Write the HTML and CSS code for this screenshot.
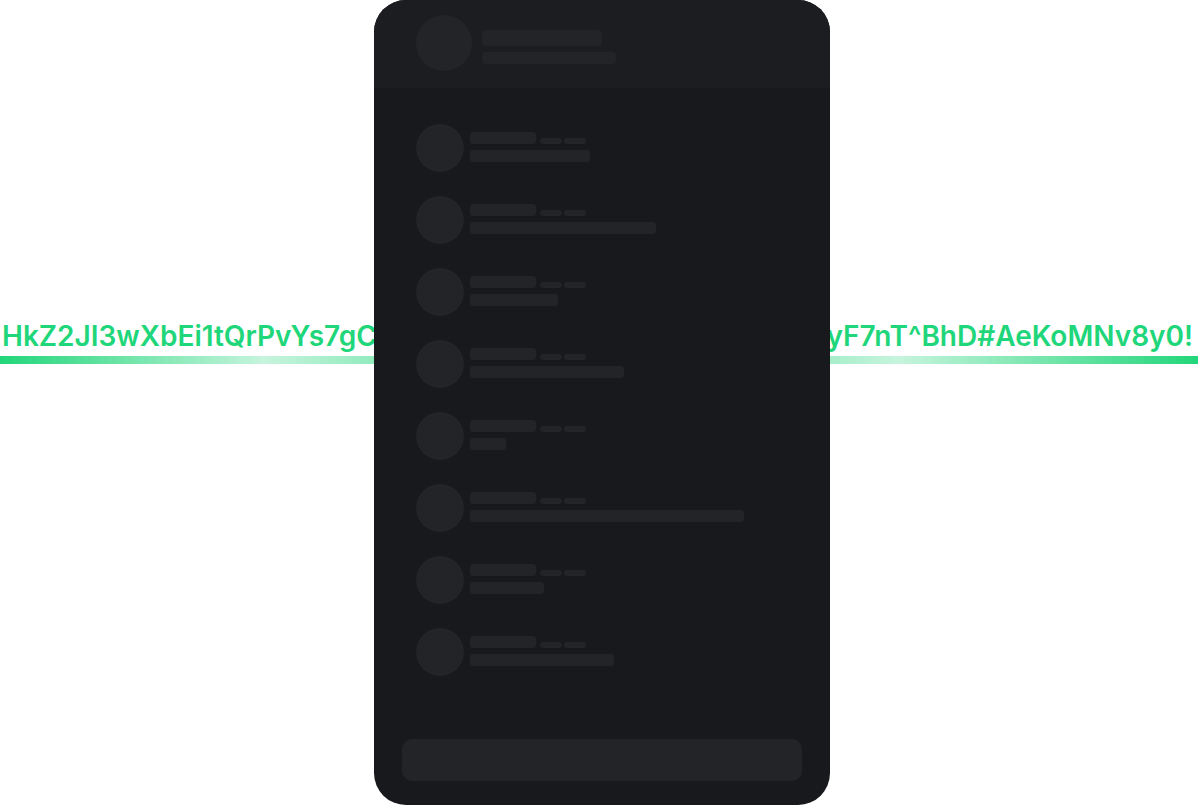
FILE: index.html
```html
<!DOCTYPE html>
<html lang="en">
<head>
<meta charset="utf-8">
<title>Chat skeleton</title>
<link rel="stylesheet" href="styles.css">
</head>
<body>
<div class="stage">
  <div class="strip">
    <div class="strip-text">
      <span class="seg">HkZ2JI3wXbEi1tQrPvYs7gC</span>
      <span class="seg">yF7nT^BhD#AeKoMNv8y0!</span>
    </div>
    <div class="strip-line"></div>
  </div>

  <div class="phone">
    <div class="phone-header">
      <div class="avatar avatar-lg"></div>
      <div class="header-lines">
        <div class="bar bar-title"></div>
        <div class="bar bar-sub"></div>
      </div>
    </div>

    <div class="list">
      <div class="row">
        <div class="avatar"></div>
        <div class="row-text">
          <div class="meta"><div class="bar name"></div><div class="bar tag"></div><div class="bar tag"></div></div>
          <div class="bar msg" style="width:120px"></div>
        </div>
      </div>
      <div class="row">
        <div class="avatar"></div>
        <div class="row-text">
          <div class="meta"><div class="bar name"></div><div class="bar tag"></div><div class="bar tag"></div></div>
          <div class="bar msg" style="width:186px"></div>
        </div>
      </div>
      <div class="row">
        <div class="avatar"></div>
        <div class="row-text">
          <div class="meta"><div class="bar name"></div><div class="bar tag"></div><div class="bar tag"></div></div>
          <div class="bar msg" style="width:88px"></div>
        </div>
      </div>
      <div class="row">
        <div class="avatar"></div>
        <div class="row-text">
          <div class="meta"><div class="bar name"></div><div class="bar tag"></div><div class="bar tag"></div></div>
          <div class="bar msg" style="width:154px"></div>
        </div>
      </div>
      <div class="row">
        <div class="avatar"></div>
        <div class="row-text">
          <div class="meta"><div class="bar name"></div><div class="bar tag"></div><div class="bar tag"></div></div>
          <div class="bar msg" style="width:36px"></div>
        </div>
      </div>
      <div class="row">
        <div class="avatar"></div>
        <div class="row-text">
          <div class="meta"><div class="bar name"></div><div class="bar tag"></div><div class="bar tag"></div></div>
          <div class="bar msg" style="width:274px"></div>
        </div>
      </div>
      <div class="row">
        <div class="avatar"></div>
        <div class="row-text">
          <div class="meta"><div class="bar name"></div><div class="bar tag"></div><div class="bar tag"></div></div>
          <div class="bar msg" style="width:74px"></div>
        </div>
      </div>
      <div class="row">
        <div class="avatar"></div>
        <div class="row-text">
          <div class="meta"><div class="bar name"></div><div class="bar tag"></div><div class="bar tag"></div></div>
          <div class="bar msg" style="width:144px"></div>
        </div>
      </div>
    </div>

    <div class="phone-footer">
      <div class="composer"></div>
    </div>
  </div>
</div>
</body>
</html>
```

FILE: styles.css
```css
* { box-sizing: border-box; }

html, body {
  margin: 0;
  padding: 0;
  background: #ffffff;
  width: 1200px;
  height: 806px;
  overflow: hidden;
}

.stage {
  display: grid;
  width: 1200px;
  height: 806px;
}

.strip, .phone {
  grid-area: 1 / 1;
}

.strip {
  margin-top: 319px;
  width: 1198px;
  align-self: start;
  display: flex;
  flex-direction: column;
  gap: 3px;
}

.strip-text {
  display: flex;
  justify-content: space-between;
  font-family: Inter, "Liberation Sans", sans-serif;
  font-weight: 600;
  font-size: 28px;
  line-height: 34px;
  color: #1fd67a;
  white-space: nowrap;
  padding: 0 5px 0 2px;
}

.strip-line {
  height: 8px;
  background: linear-gradient(90deg, #22d67a 0%, #c6f4dc 22%, #34da87 48%, #c6f4dc 75%, #22d67a 100%);
}

.phone {
  position: relative;
  z-index: 1;
  margin-left: 374px;
  width: 456px;
  height: 805px;
  align-self: start;
  justify-self: start;
  background: #18191c;
  border-radius: 32px;
  overflow: hidden;
  display: flex;
  flex-direction: column;
}

.phone-header {
  height: 88px;
  flex: none;
  background: #1c1d20;
  display: flex;
  align-items: flex-start;
  gap: 10px;
  padding: 15px 0 0 42px;
}

.avatar {
  width: 48px;
  height: 48px;
  border-radius: 50%;
  background: #232427;
  flex: none;
}

.avatar-lg {
  width: 56px;
  height: 56px;
}

.header-lines {
  display: flex;
  flex-direction: column;
  gap: 6px;
  margin-top: 15px;
}

.bar {
  background: #232428;
  border-radius: 4px;
}

.bar-title { width: 120px; height: 16px; }
.bar-sub { width: 134px; height: 12px; }

.list {
  flex: 1;
  padding: 24px 0 0 42px;
  display: flex;
  flex-direction: column;
}

.row {
  display: flex;
  gap: 6px;
  padding: 12px 0;
}

.row-text {
  display: flex;
  flex-direction: column;
  gap: 6px;
  padding-top: 8px;
}

.meta {
  display: flex;
  align-items: flex-end;
  gap: 2px;
}

.name { width: 66px; height: 12px; margin-right: 2px; border-radius: 3px; }
.tag { width: 22px; height: 6px; border-radius: 3px; }
.msg { height: 12px; border-radius: 3px; }

.phone-footer {
  flex: none;
  padding: 0 28px 24px;
}

.composer {
  height: 42px;
  background: #232428;
  border-radius: 10px;
}
```
